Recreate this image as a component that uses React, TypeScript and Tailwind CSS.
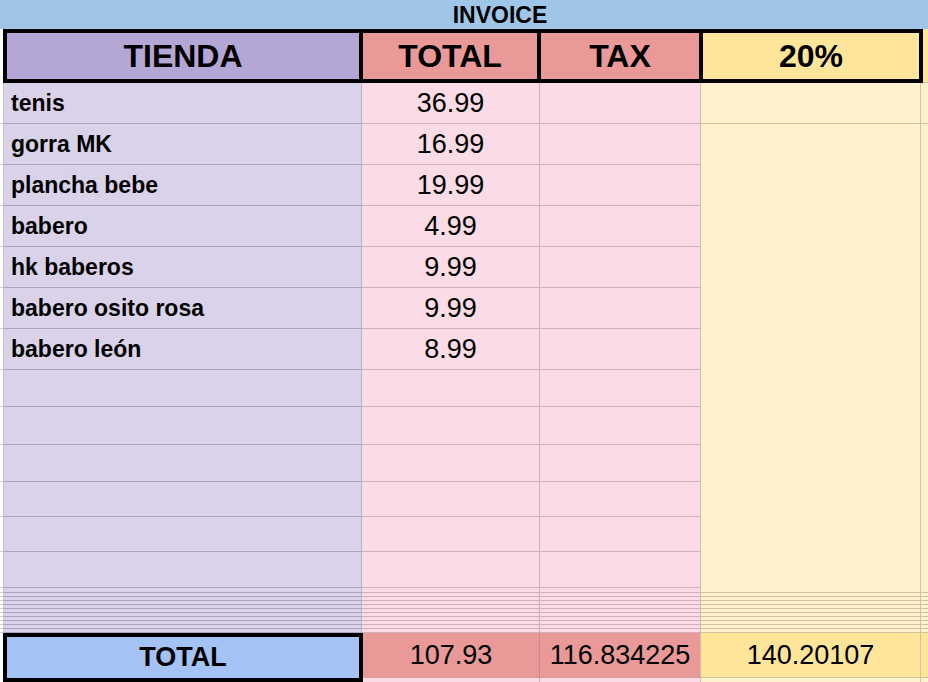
import React from "react";

const items = [
  { name: "tenis", total: "36.99" },
  { name: "gorra MK", total: "16.99" },
  { name: "plancha bebe", total: "19.99" },
  { name: "babero", total: "4.99" },
  { name: "hk baberos", total: "9.99" },
  { name: "babero osito rosa", total: "9.99" },
  { name: "babero león", total: "8.99" },
];

const emptyRows = ["h-[37px]", "h-[38px]", "h-[37px]", "h-[35px]", "h-[35px]", "h-[36px]"];
const thinRows = ["h-[5px]", "h-[4px]", "h-[4px]", "h-[4px]", "h-[4px]", "h-[4px]", "h-[4px]", "h-[4px]", "h-[4px]", "h-[4px]", "h-[4px]"];

function Row({ h, name, total, yLine }: { h: string; name?: string; total?: string; yLine?: boolean }) {
  const yb = yLine ? "border-b-[#d3c29c]" : "border-b-transparent";
  return (
    <div className={`flex ${h}`}>
      <div className="w-[4px] bg-white border-r border-r-[#c4c4c4] border-b border-b-[#cfcfcf]" />
      <div className="w-[358px] bg-[#d9d2e9] border-r border-r-[#beafc7] border-b border-b-[#aca2bf] pl-[7px] flex items-center font-bold text-[23px] leading-none">
        {name}
      </div>
      <div className="w-[178px] bg-[#fadbe6] border-r border-r-[#d2adba] border-b border-b-[#d2adba] flex items-center justify-center text-[27px] leading-none">
        {total}
      </div>
      <div className="w-[161px] bg-[#fadbe6] border-r border-r-[#d6bca4] border-b border-b-[#d2adba]" />
      <div className={`w-[220px] bg-[#fff2cc] border-r border-r-[#d3c29c] border-b ${yb}`} />
      <div className={`flex-1 bg-[#fff2cc] border-b ${yb}`} />
    </div>
  );
}

export default function App() {
  return (
    <div className="w-[928px] h-[682px] overflow-hidden bg-white text-black font-['Liberation_Sans',Arial,sans-serif]">
      {/* title bar */}
      <div className="h-[29px] bg-[#9fc5e8] flex items-center">
        <div className="w-[1000px] shrink-0 text-center font-bold text-[23px] leading-none pt-[1px]">INVOICE</div>
      </div>

      {/* header */}
      <div className="flex h-[54px]">
        <div className="w-[3px] bg-white" />
        <div className="w-[360px] border-4 border-black bg-[#b4a7d6] flex items-center justify-center font-bold text-[32px] leading-none">
          TIENDA
        </div>
        <div className="w-[178px] border-y-4 border-r-4 border-black bg-[#ea9999] flex items-center justify-center font-bold text-[32px] leading-none">
          TOTAL
        </div>
        <div className="w-[162px] border-y-4 border-r-4 border-black bg-[#ea9999] flex items-center justify-center font-bold text-[32px] leading-none">
          TAX
        </div>
        <div className="w-[220px] border-y-4 border-r-4 border-black bg-[#ffe599] flex items-center justify-center font-bold text-[32px] leading-none">
          20%
        </div>
        <div className="flex-1 bg-[#ffe599] border-b border-b-[#d3c29c]" />
      </div>

      {items.map((it, i) => (
        <Row key={it.name} h="h-[41px]" name={it.name} total={it.total} yLine={i === 0} />
      ))}
      {emptyRows.map((h, i) => (
        <Row key={"e" + i} h={h} />
      ))}
      {thinRows.map((h, i) => (
        <Row key={"t" + i} h={h} yLine />
      ))}

      {/* footer */}
      <div className="flex h-[49px]">
        <div className="w-[3px] bg-white" />
        <div className="w-[360px] border-4 border-black bg-[#a4c2f4] flex items-center justify-center font-bold text-[27px] leading-none">
          TOTAL
        </div>
        <div className="w-[177px] flex flex-col">
          <div className="h-[45px] bg-[#ea9999] border-r border-r-[#c98a8e] border-b border-b-[#d49a9c] flex items-center justify-center text-[27px] leading-none">
            107.93
          </div>
          <div className="flex-1 bg-[#fadbe6] border-r border-r-[#d2adba]" />
        </div>
        <div className="w-[161px] flex flex-col">
          <div className="h-[45px] bg-[#ea9999] border-r border-r-[#d6bca4] border-b border-b-[#d49a9c] flex items-center justify-center text-[27px] leading-none">
            116.834225
          </div>
          <div className="flex-1 bg-[#fadbe6] border-r border-r-[#d6bca4]" />
        </div>
        <div className="w-[220px] flex flex-col">
          <div className="h-[45px] bg-[#ffe599] border-r border-r-[#d3c29c] border-b border-b-[#d3c29c] flex items-center justify-center text-[27px] leading-none">
            140.20107
          </div>
          <div className="flex-1 bg-[#fff2cc] border-r border-r-[#d3c29c]" />
        </div>
        <div className="flex-1 flex flex-col">
          <div className="h-[45px] bg-[#ffe599] border-b border-b-[#d3c29c]" />
          <div className="flex-1 bg-[#fff2cc]" />
        </div>
      </div>
    </div>
  );
}
